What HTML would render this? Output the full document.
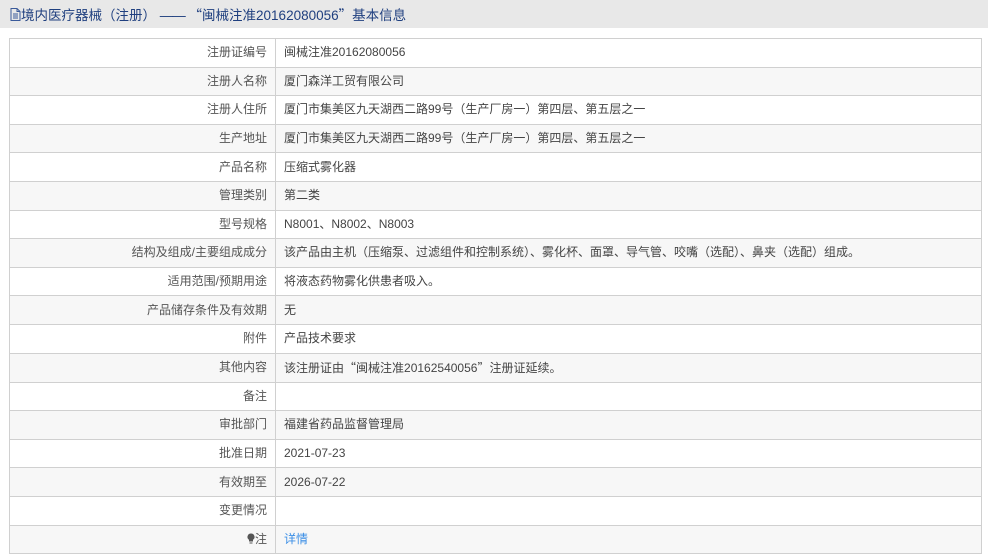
<!DOCTYPE html>
<html><head><meta charset="utf-8"><style>
body{margin:0;width:988px;height:559px;background:#fff;font-family:"Liberation Sans","Noto Sans CJK SC",sans-serif;overflow:hidden}
.hd{height:28px;background:#e8e8e8;color:#1f3f7f;font-size:13.5px;line-height:28px;padding-left:10px}
.q{font-family:"Noto Sans CJK SC",sans-serif}
table{position:absolute;left:9px;top:38px;width:973px;border-collapse:collapse;font-size:12px;color:#444}
td{border:1px solid #d0d0d0;height:27.6px;padding:0 8px;line-height:27px}
td.l{width:249px;text-align:right;color:#555}
tr:nth-child(even) td{background:#f7f7f7}
a{color:#3a8ee6;text-decoration:none}
</style></head><body>
<div class="hd"><svg width="11" height="13" viewBox="0 0 11 13" style="vertical-align:-1px"><path d="M1 .5h6l3 3v9H1z M7 .5v3h3 M3 6h5M3 8h5M3 10h5" fill="none" stroke="#3a5a9a" stroke-width="1"/></svg>境内医疗器械（注册） <span style="letter-spacing:-1px">——</span> <span class="q">“</span>闽械注准20162080056<span class="q">”</span>基本信息</div>
<table>
<tr><td class="l">注册证编号</td><td>闽械注准20162080056</td></tr>
<tr><td class="l">注册人名称</td><td>厦门森洋工贸有限公司</td></tr>
<tr><td class="l">注册人住所</td><td>厦门市集美区九天湖西二路99号（生产厂房一）第四层、第五层之一</td></tr>
<tr><td class="l">生产地址</td><td>厦门市集美区九天湖西二路99号（生产厂房一）第四层、第五层之一</td></tr>
<tr><td class="l">产品名称</td><td>压缩式雾化器</td></tr>
<tr><td class="l">管理类别</td><td>第二类</td></tr>
<tr><td class="l">型号规格</td><td>N8001、N8002、N8003</td></tr>
<tr><td class="l">结构及组成/主要组成成分</td><td>该产品由主机（压缩泵、过滤组件和控制系统）、雾化杯、面罩、导气管、咬嘴（选配）、鼻夹（选配）组成。</td></tr>
<tr><td class="l">适用范围/预期用途</td><td>将液态药物雾化供患者吸入。</td></tr>
<tr><td class="l">产品储存条件及有效期</td><td>无</td></tr>
<tr><td class="l">附件</td><td>产品技术要求</td></tr>
<tr><td class="l">其他内容</td><td>该注册证由<span class="q">“</span>闽械注准20162540056<span class="q">”</span>注册证延续。</td></tr>
<tr><td class="l">备注</td><td></td></tr>
<tr><td class="l">审批部门</td><td>福建省药品监督管理局</td></tr>
<tr><td class="l">批准日期</td><td>2021-07-23</td></tr>
<tr><td class="l">有效期至</td><td>2026-07-22</td></tr>
<tr><td class="l">变更情况</td><td></td></tr>
<tr><td class="l"><svg width="8" height="11" viewBox="0 0 8 11" style="vertical-align:-1px"><path d="M4 .5a3.5 3.5 0 0 1 2 6.4V8.5H2V6.9A3.5 3.5 0 0 1 4 .5zM2.5 9.5h3v1h-3z" fill="#555"/></svg>注</td><td><a>详情</a></td></tr>
</table>
</body></html>
